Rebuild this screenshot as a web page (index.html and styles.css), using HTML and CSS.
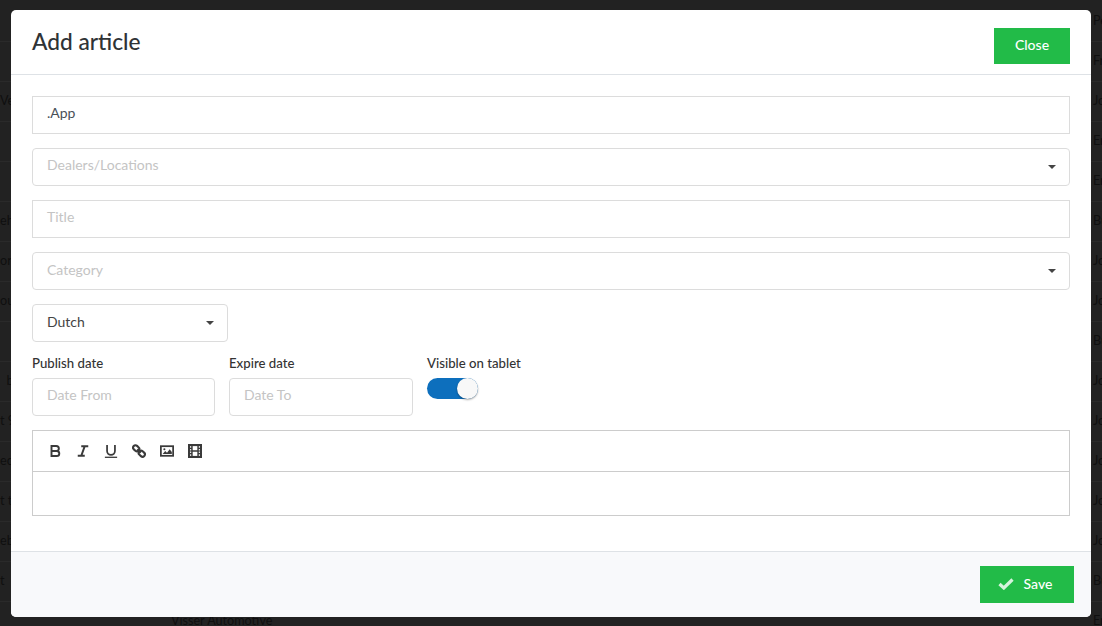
FILE: index.html
```html
<!DOCTYPE html>
<html lang="en">
<head>
    <meta charset="UTF-8">
    <title>Add article</title>
    <link rel="stylesheet" href="styles.css">
</head>
<body>

<!-- Table behind the dimmed overlay -->
<div class="bg-table">
    <div class="bg-row"><span class="bg-left"></span><span class="bg-mid"></span><span class="bg-right">Pe</span></div>
    <div class="bg-row"><span class="bg-left"></span><span class="bg-mid"></span><span class="bg-right">Fr</span></div>
    <div class="bg-row"><span class="bg-left">Ve</span><span class="bg-mid"></span><span class="bg-right">Jo</span></div>
    <div class="bg-row"><span class="bg-left"></span><span class="bg-mid"></span><span class="bg-right">En</span></div>
    <div class="bg-row"><span class="bg-left"></span><span class="bg-mid"></span><span class="bg-right">En</span></div>
    <div class="bg-row"><span class="bg-left">ehi</span><span class="bg-mid"></span><span class="bg-right">Bu</span></div>
    <div class="bg-row"><span class="bg-left">orn</span><span class="bg-mid"></span><span class="bg-right">Jo</span></div>
    <div class="bg-row"><span class="bg-left">ou</span><span class="bg-mid"></span><span class="bg-right">Jo</span></div>
    <div class="bg-row"><span class="bg-left"></span><span class="bg-mid"></span><span class="bg-right">Bu</span></div>
    <div class="bg-row"><span class="bg-left">&nbsp;&nbsp;b</span><span class="bg-mid"></span><span class="bg-right">Jo</span></div>
    <div class="bg-row"><span class="bg-left">t 9</span><span class="bg-mid"></span><span class="bg-right">Jo</span></div>
    <div class="bg-row"><span class="bg-left">ec</span><span class="bg-mid"></span><span class="bg-right">Jo</span></div>
    <div class="bg-row"><span class="bg-left">t t</span><span class="bg-mid"></span><span class="bg-right">Jo</span></div>
    <div class="bg-row"><span class="bg-left">eb</span><span class="bg-mid"></span><span class="bg-right">Jo</span></div>
    <div class="bg-row"><span class="bg-left">t</span><span class="bg-mid"></span><span class="bg-right">Bu</span></div>
    <div class="bg-row"><span class="bg-left"></span><span class="bg-mid">Visser Automotive</span><span class="bg-right">En</span></div>
</div>

<!-- Add article modal -->
<div class="modal">
    <div class="modal-header">
        <h2>Add article</h2>
        <button class="btn btn-close">Close</button>
    </div>

    <div class="modal-body">
        <div class="field square text-up">.App</div>
        <div class="field select placeholder text-up">Dealers/Locations<span class="caret"></span></div>
        <div class="field square placeholder text-up">Title</div>
        <div class="field select placeholder">Category<span class="caret"></span></div>
        <div class="field select language">Dutch<span class="caret"></span></div>

        <div class="form-row">
            <div class="col-date">
                <label>Publish date</label>
                <div class="field placeholder text-up">Date From</div>
            </div>
            <div class="col-date col-expire">
                <label>Expire date</label>
                <div class="field placeholder text-up">Date To</div>
            </div>
            <div class="col-switch">
                <label>Visible on tablet</label>
                <div class="switch"><span class="knob"></span></div>
            </div>
        </div>

        <div class="editor">
            <div class="toolbar">
                <svg class="tool" viewBox="0 0 16 16"><path d="M4 2.200h5.500a2.900 2.900 0 0 1 0 5.800H4zM4 8h6a2.900 2.900 0 0 1 0 5.800H4z" fill="none" stroke="#3a3a3a" stroke-width="2.200"/></svg>
                <svg class="tool" viewBox="0 0 16 16"><path d="M6 2.500h8M2 13.500h8M10 2.500l-4 11" fill="none" stroke="#3a3a3a" stroke-width="2.200"/></svg>
                <svg class="tool" viewBox="0 0 16 16"><path d="M3.500 1v7a4.500 4.500 0 0 0 9 0V1" fill="none" stroke="#3a3a3a" stroke-width="2"/><path d="M1 15.200h14" stroke="#3a3a3a" stroke-width="1.500"/></svg>
                <svg class="tool" viewBox="0 0 16 16"><g fill="none" stroke="#3a3a3a" stroke-width="2.400"><rect x="1" y="2.200" width="7.600" height="5.400" rx="2.700" transform="rotate(42 4.800 4.900)"/><rect x="7.400" y="8.400" width="7.600" height="5.400" rx="2.700" transform="rotate(42 11.200 11.100)"/><path d="M6 6l4 4"/></g></svg>
                <svg class="tool" viewBox="0 0 16 16"><rect x="1" y="2.500" width="14" height="11" fill="none" stroke="#3a3a3a" stroke-width="2"/><path d="M3 11.500l3-3.500 2 2 3-4 2.500 3v2.500z" fill="#3a3a3a"/><circle cx="5" cy="6" r="1.200" fill="#3a3a3a"/></svg>
                <svg class="tool" viewBox="0 0 16 16"><rect x="1.200" y="1.200" width="13.600" height="13.600" fill="none" stroke="#3a3a3a" stroke-width="2.400"/><path d="M4.500 1.500v13M11.500 1.500v13M4.500 8h7" fill="none" stroke="#3a3a3a" stroke-width="1.700"/><path d="M1.500 5h3M1.500 8h3M1.500 11h3M11.500 5h3M11.500 8h3M11.500 11h3" stroke="#3a3a3a" stroke-width="1.300"/></svg>
            </div>
            <div class="editor-area"></div>
        </div>
    </div>

    <div class="modal-footer">
        <button class="btn btn-save">
            <svg class="check" viewBox="0 0 16 12"><path d="M1.500 6l4.300 4 8.700-8.500" fill="none" stroke="#d6f3dd" stroke-width="3.200"/></svg>
            Save
        </button>
    </div>
</div>

</body>
</html>
```

FILE: styles.css
```css
html, body {
    height: 100%;
}
body {
    margin: 0;
    font-family: 'Lato', sans-serif;
    font-size: 14px;
    color: #333;
    background-color: #222;
    overflow: hidden;
}

/* dimmed table behind the modal */
.bg-table {
    padding-top: 2px;
    color: #0f0f0f;
    font-size: 12.600px;
}
.bg-row {
    display: grid;
    grid-template-columns: 171px 922px 1fr;
    height: 39px;
    line-height: 38px;
    border-bottom: 1px solid #2a2a2a;
    white-space: nowrap;
    overflow: hidden;
}

.modal {
    position: absolute;
    left: 11px;
    top: 10px;
    width: 1080px;
    height: 607px;
    background-color: #fff;
    border-radius: 5px;
    display: flex;
    flex-direction: column;
    overflow: hidden;
}
.modal-header {
    height: 65px;
    box-sizing: border-box;
    border-bottom: 1px solid #dee2e6;
    padding: 18px 21px 0;
    display: flex;
    justify-content: space-between;
    align-items: flex-start;
    flex: none;
}
.modal-header h2 {
    margin: 1px 0 0;
    font-size: 22.700px;
    font-weight: 500;
    line-height: 26px;
    color: #2f3336;
}
.btn {
    background-color: #22bb48;
    color: #fff;
    border: none;
    font-family: 'Lato', sans-serif;
    font-size: 14px;
    font-weight: 500;
}
.btn-close {
    width: 76px;
    height: 36px;
    padding: 0 0 4px;
}
.modal-body {
    flex: 1;
    padding: 21px 21px 0;
}
.field {
    box-sizing: border-box;
    height: 38px;
    border: 1px solid #dcdcdc;
    border-radius: 4px;
    padding: 0 14px;
    line-height: 34px;
    color: #495057;
    position: relative;
    margin-bottom: 14px;
}
.text-up {
    line-height: 32px;
}
.square {
    border-radius: 0;
}
.placeholder {
    color: #c4c4c4;
}
.caret {
    position: absolute;
    right: 13px;
    top: 16px;
    border-top: 4px solid #444;
    border-left: 4px solid transparent;
    border-right: 4px solid transparent;
}
.language {
    width: 196px;
    color: #444;
}
.form-row {
    display: flex;
    margin-top: -1px;
}
.form-row label {
    display: block;
    font-size: 13.200px;
    font-weight: 500;
    line-height: 16px;
    margin-bottom: 7px;
    color: #333;
}
.col-date {
    width: 183px;
    margin-right: 14px;
}
.col-expire {
    width: 184px;
}
.col-switch {
    width: 120px;
}
.switch {
    width: 51px;
    height: 21px;
    border-radius: 11px;
    background-color: #0d6fbd;
    position: relative;
}
.knob {
    position: absolute;
    right: 0;
    top: 0;
    width: 21px;
    height: 21px;
    border-radius: 50%;
    background-color: #f8f8f8;
    box-shadow: 0 1px 2px rgba(0, 0, 0, 0.35);
}
.editor {
    border: 1px solid #ccc;
}
.toolbar {
    height: 41px;
    box-sizing: border-box;
    border-bottom: 1px solid #ccc;
    padding: 0 15px;
    display: flex;
    align-items: center;
    gap: 14px;
}
.tool {
    width: 14px;
    height: 14px;
}
.editor-area {
    height: 43px;
}
.modal-footer {
    height: 66px;
    box-sizing: border-box;
    flex: none;
    border-top: 1px solid #dee2e6;
    background-color: #f8f9fb;
    padding: 14px 17px 0 0;
    display: flex;
    justify-content: flex-end;
    align-items: flex-start;
}
.btn-save {
    width: 94px;
    height: 37px;
    padding: 0 4px 2px 0;
    display: flex;
    align-items: center;
    justify-content: center;
    gap: 10px;
}
.check {
    width: 16px;
    height: 12px;
}
```
